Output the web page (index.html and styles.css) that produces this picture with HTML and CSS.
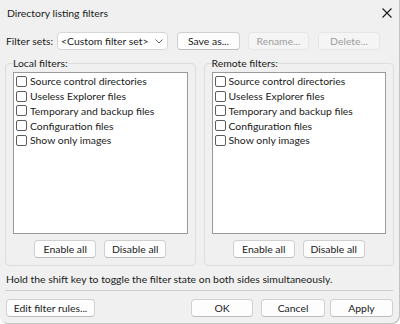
FILE: index.html
```html
<!DOCTYPE html>
<html lang="en">
<head>
  <meta charset="UTF-8">
  <title>Directory listing filters</title>
  <link rel="stylesheet" href="styles.css">
</head>
<body>

<div class="dialog">
  <div class="titlebar">
    <span class="title">Directory listing filters</span>
    <svg class="close" width="10" height="10" viewBox="0 0 10 10">
      <path d="M0.5 0.5 L9.5 9.5 M9.5 0.5 L0.5 9.5" stroke="#1a1a1a" stroke-width="1.1" fill="none"/>
    </svg>
  </div>

  <div class="content">
    <div class="sets-row">
      <span class="sets-label">Filter sets:</span>
      <div class="combo">
        <span>&lt;Custom filter set&gt;</span>
        <svg width="8" height="5" viewBox="0 0 8 5">
          <path d="M0.5 0.5 L4 4 L7.5 0.5" stroke="#606060" stroke-width="1" fill="none"/>
        </svg>
      </div>
      <button class="btn btn-save">Save as...</button>
      <button class="btn btn-rename" disabled>Rename...</button>
      <button class="btn btn-delete" disabled>Delete...</button>
    </div>

    <div class="groups">
      <fieldset class="group">
        <legend>Local filters:</legend>
        <div class="filter-list">
          <div class="filter"><span class="check"></span>Source control directories</div>
          <div class="filter"><span class="check"></span>Useless Explorer files</div>
          <div class="filter"><span class="check"></span>Temporary and backup files</div>
          <div class="filter"><span class="check"></span>Configuration files</div>
          <div class="filter"><span class="check"></span>Show only images</div>
        </div>
        <div class="group-buttons">
          <button class="btn">Enable all</button>
          <button class="btn">Disable all</button>
        </div>
      </fieldset>

      <fieldset class="group">
        <legend>Remote filters:</legend>
        <div class="filter-list">
          <div class="filter"><span class="check"></span>Source control directories</div>
          <div class="filter"><span class="check"></span>Useless Explorer files</div>
          <div class="filter"><span class="check"></span>Temporary and backup files</div>
          <div class="filter"><span class="check"></span>Configuration files</div>
          <div class="filter"><span class="check"></span>Show only images</div>
        </div>
        <div class="group-buttons">
          <button class="btn">Enable all</button>
          <button class="btn">Disable all</button>
        </div>
      </fieldset>
    </div>

    <p class="hint">Hold the shift key to toggle the filter state on both sides simultaneously.</p>
    <hr class="separator">

    <div class="footer">
      <button class="btn btn-rules">Edit filter rules...</button>
      <div class="footer-right">
        <button class="btn btn-ok">OK</button>
        <button class="btn btn-cancel">Cancel</button>
        <button class="btn btn-apply">Apply</button>
      </div>
    </div>
  </div>
</div>

</body>
</html>
```

FILE: styles.css
```css
body { margin: 0; background: #fff; font-family: "Segoe UI", Lato, sans-serif; font-size: 10.4px; color: #1a1a1a; }
.dialog { width: 400px; height: 324px; box-sizing: border-box; background: #f0f0f0; border-radius: 0 0 8px 8px; box-shadow: inset -1px -1px 0 #c4c4c4; white-space: nowrap; overflow: hidden; }

/* Title bar */
.titlebar { height: 26px; display: flex; align-items: center; justify-content: space-between; padding: 0 8px 0 7px; }
.title { line-height: 26px; }
.close { display: block; }

.content { padding: 0 6px 0 5px; }

/* Filter sets row */
.sets-row { display: flex; align-items: center; height: 18px; margin-top: 6px; padding-left: 1px; }
.sets-label { width: 51px; flex-shrink: 0; }
.combo { width: 111px; height: 18px; flex-shrink: 0; box-sizing: border-box; background: #fff; border: 1px solid #d6d6d6; border-radius: 4px; display: flex; align-items: center; justify-content: space-between; padding: 0 4px 0 3px; margin-right: 9px; }
.combo svg { display: block; }

.btn { font-family: inherit; font-size: inherit; color: #1a1a1a; height: 18px; padding: 0; flex-shrink: 0; box-sizing: border-box; background: #fdfdfd; border: 1px solid #d0d0d0; border-bottom-color: #bdbdbd; border-radius: 4px; line-height: 16px; }
.btn:disabled { background: #f5f5f5; border-color: #e6e6e6; color: #9d9d9d; }
.btn-save { width: 63px; margin-right: 8px; }
.btn-rename { width: 61px; margin-right: 9px; }
.btn-delete { width: 62px; }

/* Groups */
.groups { display: flex; gap: 8px; margin-top: 5px; }
.group { flex: 1; min-width: 0; margin: 0; padding: 1px 7px 7px; border: 1px solid #dcdcdc; border-radius: 4px; }
.group legend { padding: 0; line-height: 16px; }
.filter-list { height: 162px; box-sizing: border-box; background: #fff; border: 1px solid #9a9a9a; padding-top: 1px; }
.filter { display: flex; align-items: center; height: 14.75px; padding-left: 2px; }
.check { width: 11px; height: 11px; flex-shrink: 0; box-sizing: border-box; border: 1px solid #5c5c5c; border-radius: 2px; background: #fff; margin-right: 3px; }
.group-buttons { display: flex; justify-content: center; gap: 8px; margin-top: 6px; }
.group-buttons .btn { width: 62px; }

.hint { margin: 5px 0 0 1px; line-height: 16px; }
.separator { margin: 3px 1px 0 0; border: 0; border-top: 1px solid #cfcfcf; }

/* Footer */
.footer { display: flex; justify-content: space-between; margin-top: 8px; padding: 0 1px; }
.footer-right { display: flex; }
.btn-rules { width: 89px; }
.btn-ok { width: 62px; margin-right: 8px; }
.btn-cancel { width: 64px; margin-right: 5px; }
.btn-apply { width: 63px; }
```
